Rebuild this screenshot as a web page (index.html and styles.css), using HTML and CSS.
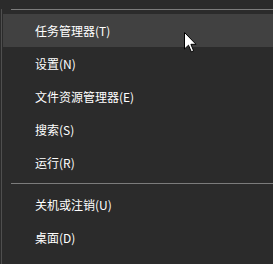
FILE: index.html
```html
<!DOCTYPE html>
<html lang="zh-CN">
<head>
    <meta charset="UTF-8">
    <title>Win+X 菜单</title>
    <link rel="stylesheet" href="styles.css">
</head>
<body>
    <div class="menu">
        <div class="separator top"></div>
        <div class="item active">任务管理器(T)</div>
        <div class="item">设置(N)</div>
        <div class="item">文件资源管理器(E)</div>
        <div class="item">搜索(S)</div>
        <div class="item">运行(R)</div>
        <div class="separator"></div>
        <div class="item">关机或注销(U)</div>
        <div class="item">桌面(D)</div>
        <svg class="cursor" width="13" height="21" viewBox="0 0 13 21">
            <path d="M0.5 0.5 L0.5 17 L4.5 13.2 L7.3 19.8 L9.6 18.8 L6.9 12.3 L12 12.3 Z" fill="#fff" stroke="#000" stroke-width="1"/>
        </svg>
    </div>
</body>
</html>
```
FILE: styles.css
```css
body {
    margin: 0;
    background-color: #2b2b2b;
    font-family: "Noto Sans CJK SC", "Noto Sans", sans-serif;
    color: #ffffff;
}
.menu {
    position: relative;
    width: 270px;
    height: 262px;
    margin-left: 1px;
    padding-left: 1px;
    border-left: 1px solid #4f4f4f;
    border-bottom: 1px solid #8a8a8a;
    box-sizing: content-box;
}
.separator {
    height: 1px;
    background-color: #7c7c7c;
    margin: 4px 0 4px 8px;
}
.separator.top {
    margin-top: 9px;
}
.item {
    height: 33px;
    line-height: 33px;
    padding-left: 32px;
    font-size: 12px;
}
.item.active {
    background-color: #414141;
}
.cursor {
    position: absolute;
    left: 182px;
    top: 23px;
}
```
